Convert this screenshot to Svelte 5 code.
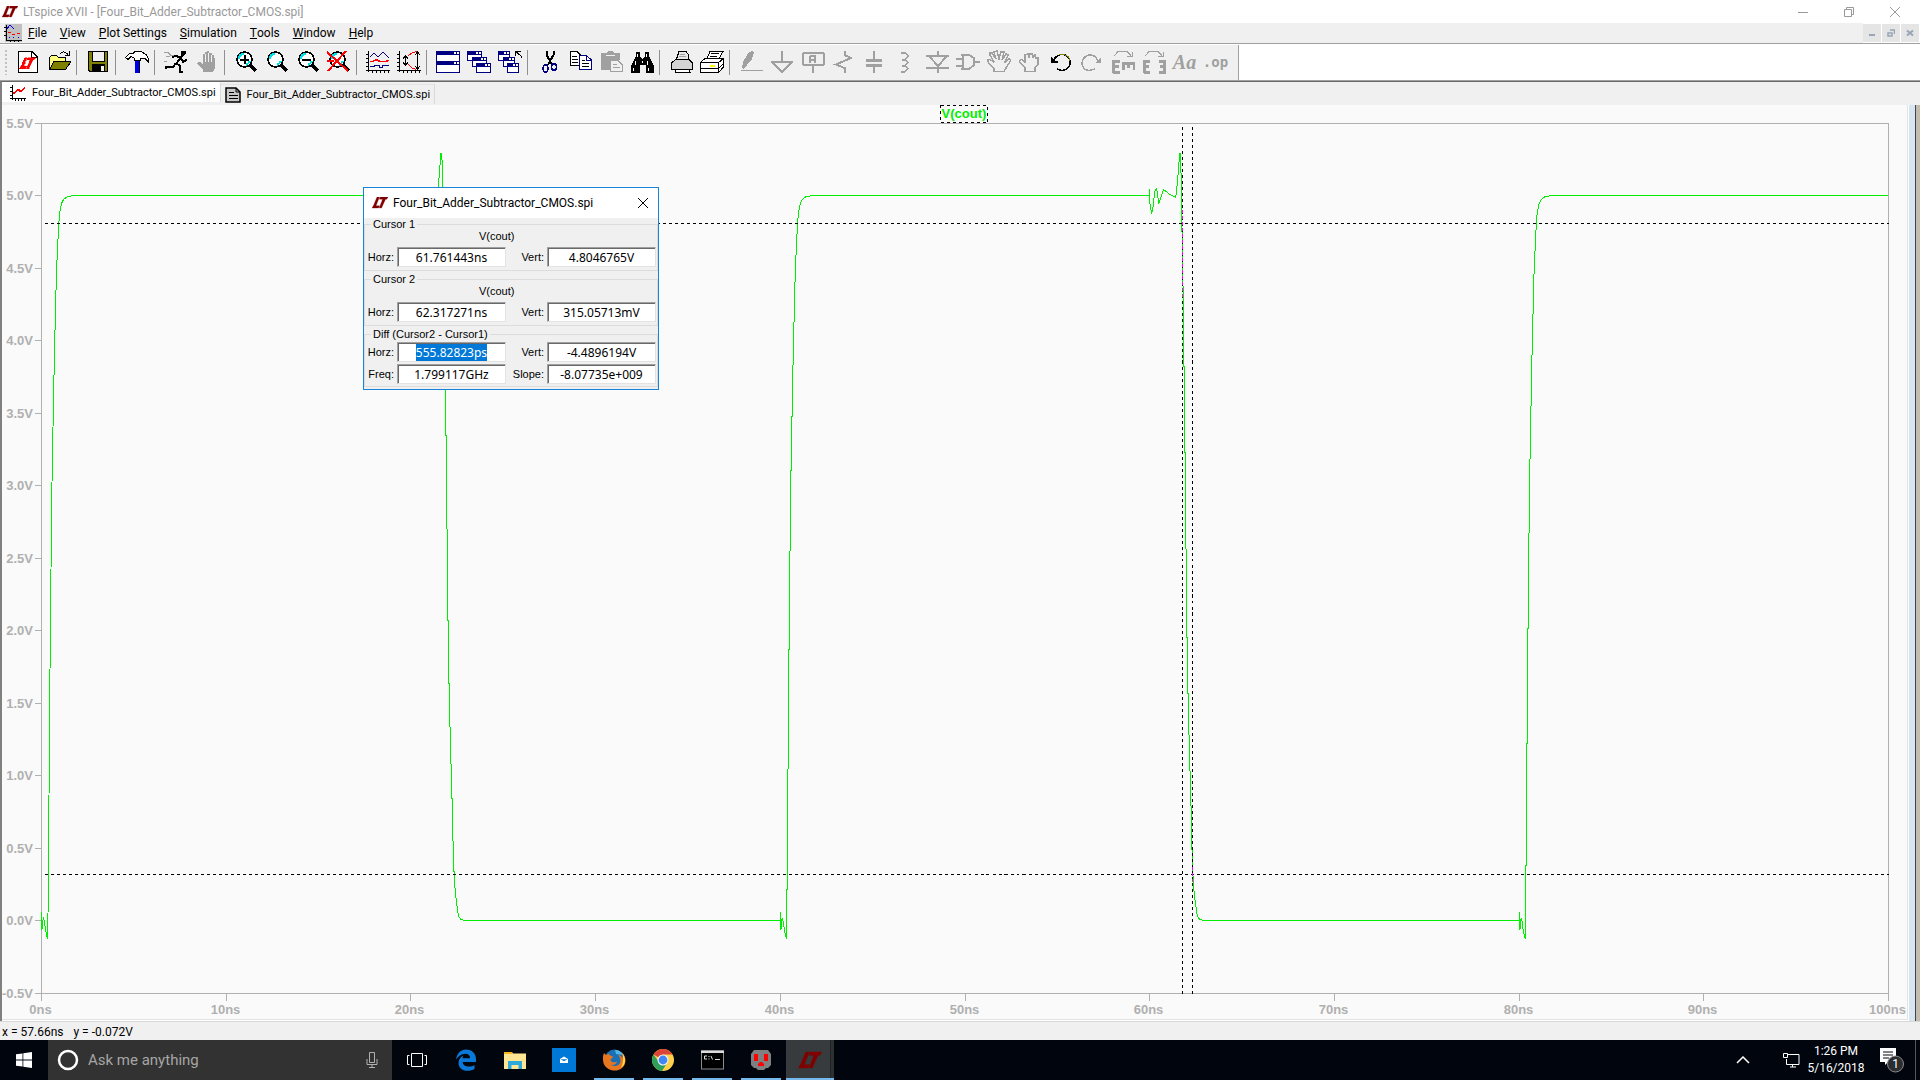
<script>
  import { onMount } from 'svelte';

  const K = '#000';
  const N = '#000080';
  const G = '#a0a0a0';

  const line = (d, color = K, width = 1) =>
    `<path d="${d}" fill="none" stroke="${color}" stroke-width="${width}"/>`;
  const shape = (d, fill, stroke = 'none') => `<path d="${d}" fill="${fill}" stroke="${stroke}"/>`;
  const win = (x, y, w, h) =>
    `<rect x="${x + 0.5}" y="${y + 0.5}" width="${w - 1}" height="${h - 1}" fill="#fff" stroke="${N}"/>` +
    `<rect x="${x}" y="${y}" width="${w}" height="4" fill="${N}"/>` +
    `<path d="M${x + w - 6} ${y + 1}h2v2h-2zM${x + w - 3} ${y + 1}h2v2h-2z" fill="#fff"/>`;
  const lens =
    `<circle cx="11.5" cy="9.5" r="7.5" fill="#fff" stroke="${K}" stroke-width="1.5"/>` +
    line('M6 9c0-3 2-5 5-5M13 15c2-1 3-2 4-4', '#00e0e8', 2) +
    line('M17 15l6 6', K, 4);
  const axes = line('M3.5 1V22M1 20.5H25M1 4.5h2M1 8.5h2M1 12.5h2M1 16.5h2M7.5 20v3M11.5 20v3M15.5 20v3M19.5 20v3M23.5 20v3');
  const logoPath = 'M5 0H7.500L4 8.800H7.500L6.500 11H0L1.600 8.300ZM8.200 0H16L14.800 2.200H13.500L9.500 11H7.200L10.600 2.200H7.300Z';

  const tools = [
    { name: 'New schematic', art: shape('M3.5 1.5H17L22.5 7V22.5H3.5Z', '#fff', K) + line('M16.5 1.5V7.5H22.5') + `<path transform="translate(4.500 7.500)" d="${logoPath}" fill="#f00" stroke="#f00" stroke-width="0.500"/>` },
    { name: 'Open', art: shape('M3.5 19V7.500L5.500 5.500H10.500L12.500 7.500H19.500V12', '#ffff80', K) + shape('M3.500 19.500L8 11.500H25L19.500 19.500Z', '#808000', K) + line('M14 4C16 1 19 1 22 4.500M23.500 1V5.500H19'), sep: true },
    { name: 'Save', art: shape('M3.5 1.5H22.5V21.500H5L3.500 20Z', '#808000', K) + shape('M7.500 1.500H19.500V11.500H7.500Z', '#f0f0f0', K) + '<rect x="7" y="14" width="13" height="8"/><rect x="16" y="16" width="3" height="5" fill="#f0f0f0"/>', sep: true },
    { name: 'Control panel', art: shape('M1.500 7.500L5.500 3.500H9L11 1.500H17L22 4.500L24.500 8.500V12L21 8.500H16.500V10.500H10.500V8.500L7 6.500L4 9.500Z', '#fff', K) + '<path d="M11 11h5v12h-5z" fill="#0000f0"/><path d="M15 11h1v12h-1z"/>', sep: true },
    { name: 'Run', art: line('M1 2.500H5L8 5.500H11M3 6.500H7M1 11.500H4', G) + shape('M18 1H23V4L20 6H18Z', K) + line('M19 6L13 14M9 7.500L13 5.500L18 8.500L20 12L24 9.500', K, 2) + line('M13 13L17 16V22H20M13 13L10 17H3V19', K, 2) },
    { name: 'Halt', art: shape('M9 22V20L3 13L4 12H6L9 15V4H11V2H13V1H15V3H18V5H20V8H21V18L19 22Z', G) + line('M11.500 4V12M14.500 3V12M17.500 5V12', '#f0f0f0'), sep: true },
    { name: 'Zoom in', art: lens + line('M7 9.500H16M11.500 5V14', K, 2) },
    { name: 'Pan', art: lens },
    { name: 'Zoom out', art: lens + line('M7 9.500H16', K, 2) },
    { name: 'Zoom to fit', art: lens + line('M1 2L22 21M20 1L2 21M1 11H8', '#f00', 2), sep: true },
    { name: 'Autorange', art: axes + line('M5 7L9 3L13 7L18 2L24 8M5 16.500H9V15.500H14V17.500H17V15.500H24', N) + line('M5 11.500H8L11 9.500L15 11.500H20L24 10.500', '#f00', 1.5) },
    { name: 'Axis limits', art: axes + line('M9.500 6V15M7 8.500L9.500 6L12 8.500M7 12.500L9.500 15L12 12.500M21.500 2V19M19 5L21.500 2L24 5M19 16L21.500 19L24 16') + line('M12 6L16 3L21 1.500M12 14L16 18L20 19.500', '#f00'), sep: true },
    { name: 'Tile windows', art: win(1, 1, 24, 11) + win(1, 11, 24, 12) },
    { name: 'Cascade windows', art: win(1, 1, 15, 10) + win(6, 7, 15, 10) + win(10, 13, 15, 10) },
    { name: 'Close all windows', art: win(1, 1, 12, 10) + win(6, 7, 12, 10) + win(10, 13, 12, 10) + line('M24 8V6L18.500 1.500M18.500 6V1.500H24', K), sep: true },
    { name: 'Cut', art: line('M10.500 1V5L13.500 10L16 15M17.500 1V5L14.500 10L12 15', K, 2) + `<ellipse cx="9.500" cy="18.500" rx="2.500" ry="3.500" fill="none" stroke="${N}" stroke-width="1.500"/><ellipse cx="18" cy="17" rx="2.500" ry="3.500" fill="none" stroke="${N}" stroke-width="1.500"/>` },
    { name: 'Copy', art: shape('M3.500 1.500H10L14.500 6V15.500H3.500Z', '#fff', K) + line('M5 6.500H10M5 9.500H11M5 12.500H11') + shape('M12.500 5.500H19.500L24.500 10V19.500H12.500Z', '#fff', N) + line('M19.500 5.500V10.500H24.500', N) + line('M15 10.500H18M15 13.500H22M15 16.500H22') },
    { name: 'Paste', art: shape('M3 3H9L10 1H15L16 3H22V10H12V20H3Z', G) + line('M8 5.500H17', '#f0f0f0') + shape('M12.500 10.500H20L24.500 15V21.500H12.500Z', '#f0f0f0', G) + line('M15 14.500H19M15 17.500H22', G) },
    { name: 'Find', art: shape('M7 2H11V6L13 9H14L16 6V2H20V6L25 16V23H17V15H11V23H2V16L7 6Z', K) + shape('M8 4H9V7H8ZM17 4H18V7H17ZM6 11H7V15H6ZM18 11H19V15H18ZM4 18H5V21H4ZM19 18H20V21H19ZM13 11H14V13H13Z', '#fff'), sep: true },
    { name: 'Print setup', art: shape('M8.500 9L11 1.500H18L20 4V9', '#e8e8e8', K) + shape('M3.500 13L7.500 9.500H21L24.500 13V19.500H3.500Z', '#d4d4d4', K) + shape('M7.500 19.500H21L22 22.500H8Z', '#fff', K) + line('M12 4.500H17M11 6.500H18', G) },
    { name: 'Print', art: shape('M7.500 9L11 1.500H24L20 9', '#fff', K) + shape('M1.500 12.500L6 8.500H24.500V17L19.500 22.500H1.500Z', '#fff', K) + line('M1.500 12.500H19.500V22.500M19.500 12.500L24.500 8.500M1.500 18.500H19.500L24.500 13.500') + line('M12 3.500H20M11 6.500H18') + '<path d="M11 15h5v2h-5z" fill="#ff0"/>', sep: true },
    { name: 'Wire', art: shape('M4 18L5 12L11 2L14 1L16 3L14 9L9 15L5 19Z', G) + line('M3 20.500H25', G) },
    { name: 'Ground', art: line('M12.500 1V11M2 11.500H24M2 11.500L13 22L24 11.500', G, 2) },
    { name: 'Label net', art: `<rect x="3" y="3" width="21" height="12" rx="2" fill="none" stroke="${G}" stroke-width="2"/>` + line('M12.500 16V23', G, 2) + line('M10 13V7L12 5.500H15V13M11 9.500H15', G, 2) },
    { name: 'Resistor', art: line('M13.500 1V5L20 8L5 14.500L13.500 18V23', G, 2) },
    { name: 'Capacitor', art: line('M12 1V9M12 16V23', G, 2) + shape('M4 9H20V12H4ZM4 14H20V17H4Z', G) },
    { name: 'Inductor', art: line('M8 2.500H12L14.500 5V7L12 9.500H9M12 9.500L14.500 12V13L12 15.500H9M12 15.500L14.500 18V19L12 21.500H8', G, 2) },
    { name: 'Diode', art: line('M2 6H25M2 18H25M14 1V6M14 17V23M5 6L14 16L23 6', G, 2) },
    { name: 'Component', art: line('M6 5H14L19 8V15L14 19H6M8 5V19M1 8.500H8M1 15.500H8M19 11.500H25', G, 2) },
    { name: 'Move', art: line('M8 21.500V19L2.500 13L2 10L4 9.500L8 12L4 5V3H6L10 9L8 2L11 1L13 9L15 2H18L16 10L20 4L22 5L19 12L23 9L25 10L20 18L18 21.500Z', G, 1.5) },
    { name: 'Drag', art: line('M8 21.500V18L2.500 12V10.500L5 9.500L8 12V5L11 4L12 7L13 4L15 4L16 7L18 5L19 8L21 8V14L18 18V21.500Z', G, 1.5) },
    { name: 'Undo', art: line('M5 12C7 5 15 2 20 7C25 13 21 20 14 20.500L9 19', K, 1.5) + shape('M3 7L5 9L8 11H10V13H3Z', K) + line('M11 4.500C17 3 22 7 22 11', '#808000') },
    { name: 'Redo', art: line('M19 11C16 4 9 3 5 8C1 14 4 20 10 20.500L16 19', G, 1.5) + shape('M22 7V13H16L18 11L21 9Z', G) },
    { name: 'Rotate', art: line('M3.500 10V23M2 11H10M3 16H9M3 22H10', G, 3) + line('M12 13H25M13 12V20M18 12V18M24 12V20', G, 3) + line('M4 6L8 1.500H17L21 5.500M22 2V6H17', G) },
    { name: 'Mirror', art: line('M3.500 10V23M2 11H9M3 16H8M3 22H9M23.500 10V23M25 11H18M24 16H19M25 22H18', G, 3) + line('M4 6L8 1.500H17L21 5.500M22 2V6H17', G) },
    { name: 'Text', text: 'Aa', style: 'serif' },
    { name: 'SPICE directive', text: '.op', style: 'mono' }
  ];

  const menus = ['File', 'View', 'Plot Settings', 'Simulation', 'Tools', 'Window', 'Help'];

  // Plot geometry: margins inside the pane, and traces on an 1847 x 870 grid.
  let paneWidth = $state(1905);
  let paneHeight = $state(914);
  const left = 39;
  const top = 18;
  const plotW = $derived(paneWidth - left - 19);
  const plotH = $derived(paneHeight - top - 26);
  const px = (ns) => Math.round(left + (plotW * ns) / 100) + 0.5;
  const py = (v) => Math.floor(top + (plotH * (5.5 - v)) / 6) + 0.5;

  const volts = Array.from({ length: 13 }, (_, i) => 5.5 - i * 0.5);
  const times = Array.from({ length: 11 }, (_, i) => i * 10);

  const rise = [[0, 797], [0, 788], [0, 806], [1, 805], [1, 798], [2, 795], [3, 798], [4, 806], [5, 811], [6, 815], [6.5, 791], [7.5, 673], [8.5, 547], [9.5, 446], [10.5, 359], [11.5, 304], [13, 227], [15, 147], [17, 105], [18, 90], [20, 80], [22, 76], [26, 73], [34, 72]];
  const fall = [[0, 72], [0, 65], [0, 79], [2, 90], [3, 86], [5, 68], [7, 65], [9, 80], [14, 66], [20, 71], [26, 74], [28, 56], [30, 30], [31, 30], [32, 92], [33.5, 172], [35.5, 345], [36.5, 443], [37.5, 530], [38.5, 579], [39.5, 619], [40.5, 653], [41.5, 689], [42.5, 735], [43.5, 756], [44.5, 770], [45.5, 778], [47, 789], [48, 793], [50, 796], [54, 797]];
  const edges = [[0, rise], [20, fall], [40, rise], [60, fall], [80, rise]];
  const trace = $derived(
    edges
      .flatMap(([ns, pts]) => pts.map(([dx, y]) => [left + ((ns * 18.47 + dx) * plotW) / 1847 + 0.5, top + (y * plotH) / 870 + 0.5]))
      .concat([[left + plotW, top + (72 * plotH) / 870 + 0.5]])
      .map((p) => p.join(','))
      .join(' ')
  );

  const cursors = [{ t: 61.8, v: 4.8046765 }, { t: 62.34, v: 0.31505713 }];

  const groups = [
    { legend: 'Cursor 1', signal: 'V(cout)', rows: [[['Horz:', '61.761443ns'], ['Vert:', '4.8046765V']]] },
    { legend: 'Cursor 2', signal: 'V(cout)', rows: [[['Horz:', '62.317271ns'], ['Vert:', '315.05713mV']]] },
    { legend: 'Diff (Cursor2 - Cursor1)', rows: [[['Horz:', '555.82823ps'], ['Vert:', '-4.4896194V']], [['Freq:', '1.799117GHz'], ['Slope:', '-8.07735e+009']]] }
  ];

  let dialog;
  onMount(() => {
    const field = dialog.querySelector('#f2-0-0');
    field.focus();
    field.select();
  });
</script>

{#snippet logo(color)}
  <svg class="logo" viewBox="0 0 16 12" aria-hidden="true"><path d={logoPath} fill={color} stroke={color} stroke-width="0.3" /></svg>
{/snippet}

<div class="app">
  <header class="titlebar">
    {@render logo('#800000')}
    <span class="title">LTspice XVII - [Four_Bit_Adder_Subtractor_CMOS.spi]</span>
    <div class="winbtns">
      <button aria-label="Minimize"><svg viewBox="0 0 12 12"><path d="M1 6.500H11" /></svg></button>
      <button aria-label="Restore"><svg viewBox="0 0 12 12"><path d="M1.500 3.500H8.500V10.500H1.500ZM3.500 3V1.500H10.500V8.500H9" /></svg></button>
      <button aria-label="Close"><svg viewBox="0 0 12 12"><path d="M1 1L11 11M11 1L1 11" /></svg></button>
    </div>
  </header>

  <nav class="menubar">
    <svg class="docicon" viewBox="0 0 18 18" aria-hidden="true" shape-rendering="crispEdges">
      <rect x="1" width="17" height="18" fill="#c0c0c0" />
      <path d="M2.500 1V16.500H18M0 3.500h2M0 7.500h2M0 11.500h2M6.500 16v2M10.500 16v2M14.500 16v2" fill="none" stroke="#000" />
      <path d="M3 5L6 1L10 5" fill="none" stroke="#00f" />
      <path d="M4 8.500H7M8 10.500H11M13 9.500H16" stroke="#f00" />
      <path d="M5 13.500H6M9 13.500H10M14 13.500H15" stroke="#00f" />
    </svg>
    {#each menus as m}
      <button><u>{m[0]}</u>{m.slice(1)}</button>
    {/each}
    <div class="mdibtns">
      <button aria-label="Minimize document"><svg viewBox="0 0 8 8"><path d="M1 6H7" /></svg></button>
      <button aria-label="Restore document"><svg viewBox="0 0 8 8"><path d="M1 4H5V7H1ZM3 1H7.500V5" stroke-width="1.500" /></svg></button>
      <button aria-label="Close document"><svg viewBox="0 0 8 8"><path d="M1 1.500L7 6.500M7 1.500L1 6.500" /></svg></button>
    </div>
  </nav>

  <div class="toolrow">
    <div class="toolbar" role="toolbar" aria-label="Tools">
      <div class="grip"></div>
      {#each tools as t}
        <button class="tool" aria-label={t.name}>
          {#if t.text}
            <span class={t.style}>{t.text}</span>
          {:else}
            <svg viewBox="0 0 25 24" shape-rendering="crispEdges">{@html t.art}</svg>
          {/if}
        </button>
        {#if t.sep}<span class="sep"></span>{/if}
      {/each}
    </div>
  </div>

  <main class="workspace">
    <div class="tabs" role="tablist">
      <button class="tab active" role="tab" aria-selected="true">
        <svg viewBox="0 0 16 16" shape-rendering="crispEdges"><path d="M2.500 0V15M0 13.500H16M0 2.500h2M0 6.500h2M0 10.500h2M5.500 13v3M8.500 13v3M11.500 13v3M14.500 13v3" fill="none" stroke="#000" /><path d="M3 7.500H5L8 4.500L11 6.500L15 2.500" fill="none" stroke="#f00" stroke-width="2" /></svg>
        Four_Bit_Adder_Subtractor_CMOS.spi
      </button>
      <button class="tab" role="tab" aria-selected="false">
        <svg viewBox="0 0 16 16"><path d="M1 1H11L15 5V15H1Z" fill="#c8c8c8" stroke="#000" stroke-width="1.500" /><path d="M4 5.500H9M4 8.500H13M4 11.500H13M11 1V5H15" fill="none" stroke="#000" /></svg>
        Four_Bit_Adder_Subtractor_CMOS.spi
      </button>
    </div>

    <div class="panes">
      <div class="plot" bind:clientWidth={paneWidth} bind:clientHeight={paneHeight}>
        <svg class="chart" role="img" aria-label="V(cout) waveform">
          <g class="axis" shape-rendering="crispEdges">
            <rect x={px(0)} y={py(5.5)} width={px(100) - px(0)} height={py(-0.5) - py(5.5)} />
            {#each volts as v}<path d="M{px(0) - 7} {py(v)}h7" />{/each}
            {#each times as t}<path d="M{px(t)} {py(-0.5)}v7" />{/each}
          </g>
          <g class="labels">
            {#each volts as v}<text x={left - 8} y={py(v) + 4} text-anchor="end">{v.toFixed(1)}V</text>{/each}
            {#each times as t}<text x={px(t) - 1} y={py(-0.5) + 20} text-anchor="middle">{t}ns</text>{/each}
          </g>
          <polyline class="trace" points={trace} shape-rendering="crispEdges" />
          <g class="cursor" shape-rendering="crispEdges">
            {#each cursors as c}
              <path d="M{px(c.t)} {py(5.5) + 3}V{py(-0.5)}M{px(0) + 3} {py(c.v)}H{px(100)}" />
            {/each}
          </g>
          <path class="overlap" shape-rendering="crispEdges" d="M{px(61.8)} {py(4.9)}V{py(4.3)}M{px(62.34)} {py(0.37)}V{py(0.25)}" />
          <text class="signal" x={(px(0) + px(100)) / 2 - 1} y="13" text-anchor="middle">V(cout)</text>
          <rect class="signalbox" x={Math.round((px(0) + px(100)) / 2) - 24.5} y="0.5" width="47" height="17" shape-rendering="crispEdges" />
        </svg>
      </div>
      <div class="edge"></div>
    </div>
  </main>

  <footer class="status"><span>x = 57.66ns</span><span>y = -0.072V</span></footer>

  <div class="taskbar">
    <button class="start" aria-label="Start"><svg viewBox="0 0 16 16"><path d="M0 2.300L6.500 1.400V7.500H0ZM7.300 1.300L16 0V7.500H7.300ZM0 8.400H6.500V14.600L0 13.700ZM7.300 8.400H16V16L7.300 14.800Z" fill="#fff" /></svg></button>
    <label class="search">
      <svg class="ring" viewBox="0 0 22 22"><circle cx="11" cy="11" r="9" fill="none" stroke="#fff" stroke-width="2.500" /></svg>
      <input type="text" placeholder="Ask me anything" aria-label="Search" />
      <svg class="mic" viewBox="0 0 12 18"><path d="M3.500 1.500H8.500V11.500H3.500ZM1 8V13.500H11V8M6 14V16.500M3 16.500H9" fill="none" stroke="#b0b0b0" /></svg>
    </label>
    <button class="task view" aria-label="Task View"><svg viewBox="0 0 24 24"><path d="M6.500 5.500H17.500V18.500H6.500ZM4.500 7.500H2.500V16.500H4.500M19.500 7.500H21.500V16.500H19.500" fill="none" stroke="#fff" /></svg></button>
    <button class="task" aria-label="Edge"><svg viewBox="0 0 24 24"><path d="M2 11.500C3 5 7 1.500 12 1.500C18.500 1.500 22 6 22 11V14H8.500C9 17 11.500 18.500 14.500 18.500C17 18.500 19 18 20.500 17V21C18.500 22 16 22.800 13.500 22.800C8 22.800 4.500 19.500 4.500 15C4.500 11.500 6.500 9 9.500 7.500C8.800 8.500 8.500 9.300 8.500 10.300H16C16 7.300 14.500 5.700 11.500 5.700C7.500 5.700 4 8.500 2 11.500Z" fill="#0b78d8" /></svg></button>
    <button class="task" aria-label="File Explorer"><svg viewBox="0 0 24 24"><path d="M1 4H9L10 5.500H23V21H1Z" fill="#ffe693" /><path d="M1 4H9V6H1Z" fill="#f5b81c" /><path d="M5 13H19V21H15.500V17H8.500V21H5Z" fill="#2fa8dc" /></svg></button>
    <button class="task" aria-label="Mail"><svg viewBox="0 0 24 24"><rect width="24" height="24" fill="#0078d7" /><path d="M8 11L12 8.500L16 11V15H8Z" fill="#fff" /><path d="M8.500 11.300H15.500L12 13.300Z" fill="#0078d7" /></svg></button>
    <button class="task running" aria-label="Firefox"><svg viewBox="0 0 24 24"><circle cx="12.500" cy="11.500" r="10" fill="#1a6fb5" /><path d="M13 2C17 2 20 4 21.500 7L14 6Z" fill="#4fb8e8" /><path d="M2 5L4 7L7 5.500C7 7.500 9 8 11 8.500C10.500 10.500 8.500 10.500 8.500 12C9 14.500 12 15 15 13.500C14.500 16.500 11 17.500 9 16.500C12 19.500 18 18 18.500 13C18.500 10 17 8 16 6.500C19 7.500 20.500 9.500 20.500 11C21 8 20.500 5.500 19.500 4C25 9 24.500 16 20 20C14 25 4 22.500 1.500 15C0.500 11 1 7.500 2 5Z" fill="#e8761e" /><path d="M20.500 5.500C25 11 23 17.500 19 20C21 16 21.500 11 20.500 5.500Z" fill="#ffd34a" /></svg></button>
    <button class="task running" aria-label="Chrome"><svg viewBox="0 0 24 24"><circle cx="12" cy="12" r="11" fill="#ffd04a" /><path d="M12 12L2.500 6.500A11 11 0 0 1 21.500 6.500H12Z" fill="#db4437" /><path d="M2.500 6.500A11 11 0 0 0 11 23L16.500 14.500L12 12L8 14Z" fill="#2f9e58" /><circle cx="12" cy="12" r="5.500" fill="#f4f4f4" /><circle cx="12" cy="12" r="4.400" fill="#4285f4" /></svg></button>
    <button class="task running" aria-label="Command Prompt"><svg viewBox="0 0 24 24"><rect x="1.500" y="3" width="22" height="18" fill="#000" stroke="#8c8c8c" /><path d="M1 2.500H24V5H1Z" fill="#dcdcdc" /><path d="M7 8H4.500V11H7M9 8V9M9 10.500V11.500M11 8L12.500 11.500M15 11.500H20" fill="none" stroke="#ddd" /></svg></button>
    <button class="task running" aria-label="Socket"><svg viewBox="0 0 24 24"><path d="M5 2H19L22 6V17L19 20H17L15 22H9L7 20H5L2 17V6Z" fill="#808080" /><path d="M5 6H9V13H5ZM15 6H19V13H15ZM9 18V16L11 14H13L15 16V18Z" fill="#f00" /></svg></button>
    <button class="task current" aria-label="LTspice"><svg viewBox="0 0 24 24"><path transform="translate(0.500 4) scale(1.450)" d={logoPath} fill="#800000" stroke="#800000" stroke-width="0.3" /></svg></button>
    <div class="tray">
      <button aria-label="Show hidden icons"><svg class="chev" viewBox="0 0 14 8"><path d="M1 7L7 1L13 7" fill="none" stroke="#fff" stroke-width="1.500" /></svg></button>
      <button aria-label="Network"><svg class="net" viewBox="0 0 17 15"><path d="M5 1.500H16V11.500H3.500V6M7 14H13M9.500 12V14M0.500 0.500H4.500V4.500H0.500Z" fill="none" stroke="#fff" /></svg></button>
      <div class="clock"><span>1:26 PM</span><span>5/16/2018</span></div>
      <button class="notify" aria-label="Notifications"><svg viewBox="0 0 26 26"><path d="M2 1H18V15H10L7 18V15H2Z" fill="#fff" /><path d="M5 5H15M5 8H15M5 11H11" stroke="#01060e" /><circle cx="17.500" cy="17" r="8" fill="#2b2d30" stroke="#8a8a8a" /><text x="17.500" y="21" text-anchor="middle">1</text></svg></button>
    </div>
  </div>

  <div class="dialog" role="dialog" aria-label="Cursor readout" bind:this={dialog}>
    <div class="dtitle">
      {@render logo('#800000')}
      <span>Four_Bit_Adder_Subtractor_CMOS.spi</span>
      <button aria-label="Close dialog"><svg viewBox="0 0 12 12"><path d="M1 1L11 11M11 1L1 11" fill="none" stroke="#000" /></svg></button>
    </div>
    <form class="dbody">
      {#each groups as g, gi}
        <fieldset class:diff={!g.signal}>
          <legend>{g.legend}</legend>
          {#if g.signal}<div class="sig">{g.signal}</div>{/if}
          {#each g.rows as row, ri}
            <div class="row">
              {#each row as [label, value], ci}
                <label for="f{gi}-{ri}-{ci}">{label}</label>
                <input id="f{gi}-{ri}-{ci}" type="text" {value} />
              {/each}
            </div>
          {/each}
        </fieldset>
      {/each}
    </form>
  </div>
</div>

<style>
  :global(body) { margin: 0; }
  .app { min-height: 100vh; display: flex; flex-direction: column; background: #f0f0f0; color: #000; font: 12px/16px Roboto, "Noto Sans", sans-serif; position: relative; }
  button { border: 0; padding: 0; margin: 0; background: none; color: inherit; font: inherit; display: flex; align-items: center; justify-content: center; }
  svg { display: block; }
  .logo { width: 16px; height: 12px; flex: none; }

  .titlebar { height: 23px; background: #fff; display: flex; align-items: center; gap: 5px; padding: 0 2px; color: #999; }
  .winbtns { margin-left: auto; display: flex; }
  .winbtns button { width: 46px; height: 20px; }
  .winbtns svg { width: 12px; height: 12px; fill: none; stroke: #999; }

  .menubar { height: 20px; display: flex; align-items: center; gap: 13px; padding-left: 4px; border-bottom: 1px solid #a0a0a0; }
  .docicon { width: 18px; height: 18px; margin-right: -7px; }
  .mdibtns { margin-left: auto; align-self: stretch; display: flex; gap: 1px; padding: 1px 1px 1px 0; background: #fff; }
  .mdibtns button { width: 18px; background: #e5e5e5; }
  .mdibtns svg { width: 8px; height: 8px; fill: none; stroke: #97a5b7; stroke-width: 2; }

  .toolrow { background: #fff; border-bottom: 1px solid #a0a0a0; padding-top: 1px; display: flex; }
  .toolbar { display: flex; height: 35px; padding-right: 7px; background: #f0f0f0; border-right: 1px solid #a0a0a0; }
  .grip { width: 2px; margin: 5px 5px; background: repeating-linear-gradient(#c0c0c0 0 2px, transparent 2px 4px); }
  .tool { width: 31px; padding-bottom: 1px; }
  .tool svg { width: 25px; height: 24px; }
  .sep { width: 1px; margin: 5px 5px 5px 2px; background: #909090; }
  .serif, .mono { color: #a0a0a0; font-weight: bold; }
  .serif { font: italic bold 20px/24px "Liberation Serif", serif; }
  .mono { font: bold 14px/24px "DejaVu Sans Mono", monospace; }

  .workspace { flex: 1; display: flex; flex-direction: column; border-top: 1px solid #696969; border-left: 2px solid #808080; }
  .tabs { height: 23px; display: flex; align-items: flex-start; font-size: 11px; }
  .tab { height: 20px; padding: 0 4px; gap: 6px; margin-top: 2px; border-right: 1px solid #d9d9d9; border-top: 1px solid #e3e3e3; }
  .tab.active { background: #fff; margin-top: 0; padding-left: 8px; border-top-color: #fff; }
  .tab svg { width: 16px; height: 16px; }

  .panes { flex: 1; display: flex; background: #fff; }
  .plot { flex: 1; min-width: 0; display: flex; flex-direction: column; background: #fafafa; border-right: 1px solid #e3e3e3; border-bottom: 1px solid #e3e3e3; margin-bottom: 1px; }
  .chart { width: 100%; height: 0; flex: 1; font: bold 13px "Liberation Sans", Arial, sans-serif; }
  .axis { fill: none; stroke: #b0b0b0; }
  .labels { fill: #b0b0b0; }
  .trace { fill: none; stroke: #00ee00; }
  .cursor { fill: none; stroke: #000; stroke-dasharray: 3 3; }
  .overlap { fill: none; stroke: #ff00ff; stroke-dasharray: 3 3; }
  .signal { fill: #00ee00; }
  .signalbox { fill: none; stroke: #000; stroke-dasharray: 3 3; }
  .edge { width: 7px; margin-left: 1px; background: #d7e5f3; border-right: 4px solid #c3bdb0; box-shadow: inset -1px 0 #444; }

  .status { height: 18px; border-top: 1px solid #d7d7d7; display: flex; gap: 10px; padding-left: 2px; line-height: 20px; }

  .taskbar { height: 40px; display: flex; background: #01060e; color: #fff; }
  .start { width: 48px; }
  .start svg { width: 16px; height: 16px; }
  .search { width: 344px; box-sizing: border-box; padding: 0 14px 0 9px; background: #323232; display: flex; align-items: center; gap: 9px; }
  .search input { flex: 1; min-width: 0; border: 0; padding: 0; background: none; color: #fff; outline: 0; font: 15px/20px Roboto, sans-serif; }
  .search input::placeholder { color: #a6a6a6; opacity: 1; }
  .ring { width: 22px; height: 22px; }
  .mic { width: 12px; height: 18px; }
  .task { width: 48px; margin-right: 1px; box-sizing: border-box; border-bottom: 2px solid transparent; padding-top: 2px; }
  .view { width: 49px; }
  .task svg { width: 24px; height: 24px; }
  .running { width: 40px; margin: 0 4px 0 5px; border-color: #76b9ed; }
  .current { margin-left: 1px; background: linear-gradient(90deg, #373b3e 44px, #202427 44px 45px, #2c3033 45px); border-color: #76b9ed; }
  .tray { margin-left: auto; margin-right: 4px; padding-right: 11px; border-right: 1px solid #555; display: flex; align-items: center; }
  .chev { width: 14px; height: 8px; margin-right: 33px; }
  .net { width: 17px; height: 15px; margin-right: 8px; }
  .clock { display: flex; flex-direction: column; align-items: center; width: 56px; line-height: 17px; margin-right: 14px; }
  .notify svg { width: 26px; height: 26px; }
  .notify text { fill: #fff; font-size: 12px; }

  .dialog { position: absolute; left: 363px; top: 187px; width: 294px; border: 1px solid #1883d7; background: #f0f0f0; }
  .dtitle { height: 30px; background: #fff; display: flex; align-items: center; padding: 0 9px 0 8px; gap: 5px; }
  .dtitle button { margin-left: auto; }
  .dtitle button svg { width: 12px; height: 12px; }
  .dbody { font: 11px/13px "Liberation Sans", Arial, sans-serif; }
  fieldset { margin: 0 0 2px; padding: 0 0 3px; border: 1px solid #dcdcdc; min-width: 0; }
  .diff { padding-bottom: 2px; }
  legend { margin-left: 6px; padding: 0 2px; line-height: 12px; }
  .sig { padding-left: 114px; line-height: 13px; margin-bottom: 4px; }
  .row { display: grid; grid-template-columns: 29px 109px 35px 109px; gap: 3px; align-items: center; }
  .diff .row { margin-top: 2px; }
  .row label { text-align: right; }
  .row input { box-sizing: border-box; min-width: 0; width: 100%; height: 20px; padding: 0; border: 1px solid; border-color: #a0a0a0 #e3e3e3 #e3e3e3 #a0a0a0; box-shadow: inset 1px 1px #696969; background: #fff; text-align: center; outline: 0; font: 12px/16px "Noto Sans", sans-serif; }
  .row input::selection { background: #0078d7; color: #fff; }
</style>
